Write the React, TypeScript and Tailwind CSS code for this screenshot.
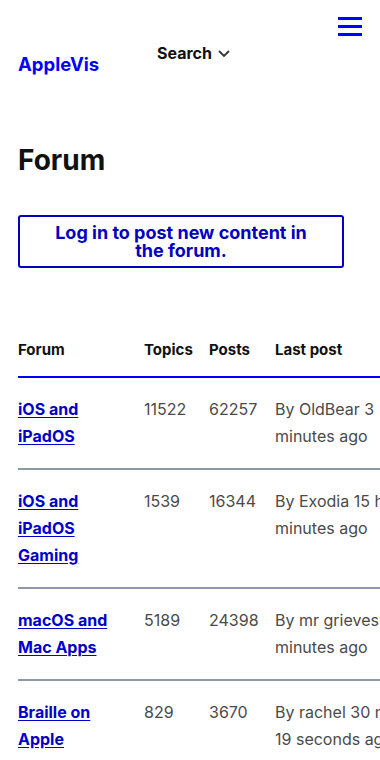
import React from 'react'

type ForumRow = {
  name: string
  topics: string
  posts: string
  last: string[]
}

const rows: ForumRow[] = [
  { name: 'iOS and iPadOS', topics: '11522', posts: '62257', last: ['By OldBear 3', 'minutes ago'] },
  { name: 'iOS and iPadOS Gaming', topics: '1539', posts: '16344', last: ['By Exodia 15 hours', 'minutes ago'] },
  { name: 'macOS and Mac Apps', topics: '5189', posts: '24398', last: ['By mr grieves 12', 'minutes ago'] },
  { name: 'Braille on Apple', topics: '829', posts: '3670', last: ['By rachel 30 minutes', '19 seconds ago'] },
]

function Chevron() {
  return (
    <svg width="12" height="8" viewBox="0 0 12 8" fill="none" className="ml-[6px] mt-[2px]">
      <path d="M1.5 1.5L6 6L10.5 1.5" stroke="#333" strokeWidth="1.8" strokeLinecap="round" />
    </svg>
  )
}

export default function App() {
  return (
    <div className="min-h-screen overflow-hidden bg-white font-['Inter',sans-serif] text-[#111]">
      <header className="flex items-start pl-[18px] pr-[18px]">
        <a href="#" className="w-[139px] pt-[52px] text-[18.5px] font-bold leading-[24px] text-[#0000ff]">
          AppleVis
        </a>
        <button className="flex items-center pt-[43px] text-[16px] font-bold leading-[20px] text-[#111]">
          Search
          <Chevron />
        </button>
        <button aria-label="Menu" className="ml-auto flex flex-col gap-[5px] pt-[17px]">
          <span className="block h-[3px] w-[24px] bg-[#0000ff]" />
          <span className="block h-[3px] w-[24px] bg-[#0000ff]" />
          <span className="block h-[3px] w-[24px] bg-[#0000ff]" />
        </button>
      </header>

      <main className="px-[18px]">
        <h1 className="mt-[66px] text-[28px] font-bold leading-[36px] text-[#111]">Forum</h1>

        <a
          href="#"
          className="mt-[37px] block w-[326px] rounded-[3px] border-2 border-[#0000c0] px-[34px] py-[6.5px] text-center text-[18px] font-bold leading-[18px] text-[#0000c0]"
        >
          Log in to post new content in the forum.
        </a>

        <div className="-mr-[18px] mt-[56px] overflow-hidden">
          <table className="w-[440px] table-fixed border-collapse text-left">
            <colgroup>
              <col className="w-[126px]" />
              <col className="w-[65px]" />
              <col className="w-[66px]" />
              <col className="w-[183px]" />
            </colgroup>
            <thead>
              <tr className="border-b-2 border-[#0000ff]">
                <th className="pb-[16px] pt-4 text-[15px] font-bold leading-[20px]">Forum</th>
                <th className="pb-[16px] pt-4 text-[15px] font-bold leading-[20px]">Topics</th>
                <th className="pb-[16px] pt-4 text-[15px] font-bold leading-[20px]">Posts</th>
                <th className="pb-[16px] pt-4 text-[15px] font-bold leading-[20px]">Last post</th>
              </tr>
            </thead>
            <tbody className="text-[16px] leading-[27px] text-[#4a4a4a]">
              {rows.map((row) => (
                <tr key={row.name} className="border-b-2 border-[#8d9aa5] align-top">
                  <td className="pb-[18px] pr-4 pt-[18px]">
                    <a href="#" className="font-bold text-[#0000c8] underline underline-offset-2">
                      {row.name}
                    </a>
                  </td>
                  <td className="pb-[18px] pt-[18px]">{row.topics}</td>
                  <td className="pb-[18px] pt-[18px]">{row.posts}</td>
                  <td className="pb-[18px] pt-[18px]">
                    {row.last.map((line) => (
                      <span key={line} className="block whitespace-nowrap">
                        {line}
                      </span>
                    ))}
                  </td>
                </tr>
              ))}
            </tbody>
          </table>
        </div>
      </main>
    </div>
  )
}
